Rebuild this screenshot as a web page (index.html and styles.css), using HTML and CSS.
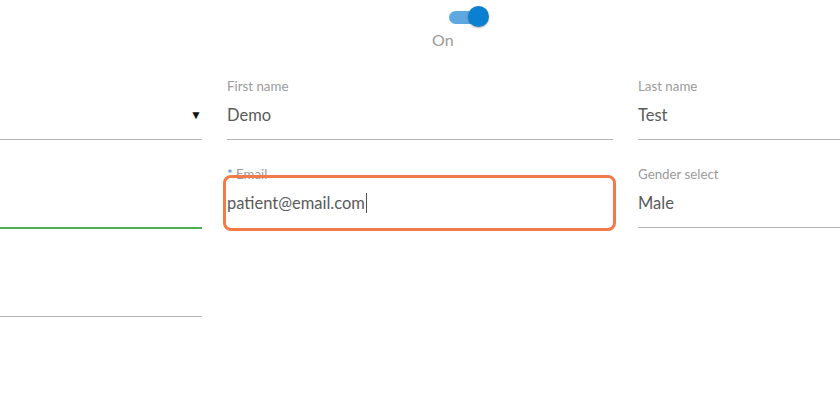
FILE: index.html
```html
<!DOCTYPE html>
<html>
<head>
<meta charset="utf-8">
<link rel="stylesheet" href="styles.css">
</head>
<body>
<div class="page">
  <div class="switch-block">
    <div class="switch"><span class="track"></span><span class="knob"></span></div>
    <div class="switch-label">On</div>
  </div>
  <div class="grid">
    <div class="field left">
      <div class="label"></div>
      <div class="input select"><span class="arrow">▼</span></div>
    </div>
    <div class="field">
      <div class="label">First name</div>
      <div class="input">Demo</div>
    </div>
    <div class="field">
      <div class="label">Last name</div>
      <div class="input">Test</div>
    </div>

    <div class="field left">
      <div class="label"></div>
      <div class="input valid"></div>
    </div>
    <div class="field focus">
      <div class="label"><span class="req">*</span> Email</div>
      <div class="input no-line">patient@email.com<span class="caret"></span></div>
      <div class="highlight"></div>
    </div>
    <div class="field">
      <div class="label">Gender select</div>
      <div class="input">Male</div>
    </div>

    <div class="field left">
      <div class="label"></div>
      <div class="input"></div>
    </div>
  </div>
</div>
</body>
</html>
```
FILE: styles.css
```css
html, body {
  margin: 0;
  padding: 0;
  background: #fff;
  overflow: hidden;
}
body {
  font-family: Lato, "Open Sans", sans-serif;
  width: 840px;
  height: 405px;
}
.page {
  position: relative;
}
.switch-block {
  display: flex;
  flex-direction: column;
  align-items: flex-start;
  padding-left: 432px;
  padding-top: 6px;
  height: 78px;
  box-sizing: border-box;
}
.switch {
  position: relative;
  width: 40px;
  height: 22px;
  margin-left: 17px;
}
.track {
  position: absolute;
  left: 0;
  top: 5px;
  width: 36px;
  height: 13px;
  border-radius: 7px;
  background: #5ea8e2;
}
.knob {
  position: absolute;
  left: 19px;
  top: 0;
  width: 21px;
  height: 21px;
  border-radius: 50%;
  background: #0b7fd0;
  box-shadow: 0 1px 2px rgba(0,0,0,0.3);
}
.switch-label {
  font-size: 16px;
  color: #9a9a9a;
  line-height: 18px;
  margin-top: 3px;
}
.grid {
  display: grid;
  grid-template-columns: 202px 386px 1fr;
  column-gap: 25px;
  row-gap: 26px;
}
.field {
  position: relative;
}
.label {
  font-size: 13.3px;
  line-height: 16px;
  height: 16px;
  color: #9b9b9b;
  white-space: nowrap;
}
.req {
  color: #3a8fd6;
}
.input {
  height: 41px;
  padding-bottom: 4px;
  border-bottom: 1px solid #b3b3b3;
  font-size: 16.5px;
  color: #5a5a5a;
  display: flex;
  align-items: center;
}
.input.no-line {
  border-bottom-color: transparent;
}
.input.select {
  justify-content: flex-end;
}
.arrow {
  font-size: 12px;
  color: #111;
}
.input.valid {
  border-bottom: 2px solid #4caf50;
}
.caret {
  display: inline-block;
  width: 1px;
  height: 20px;
  background: #555;
  margin-left: 1px;
}
.highlight {
  position: absolute;
  left: -4px;
  right: -3px;
  top: 9px;
  height: 50px;
  border: 3px solid #f27a4a;
  border-radius: 8px;
}
```
